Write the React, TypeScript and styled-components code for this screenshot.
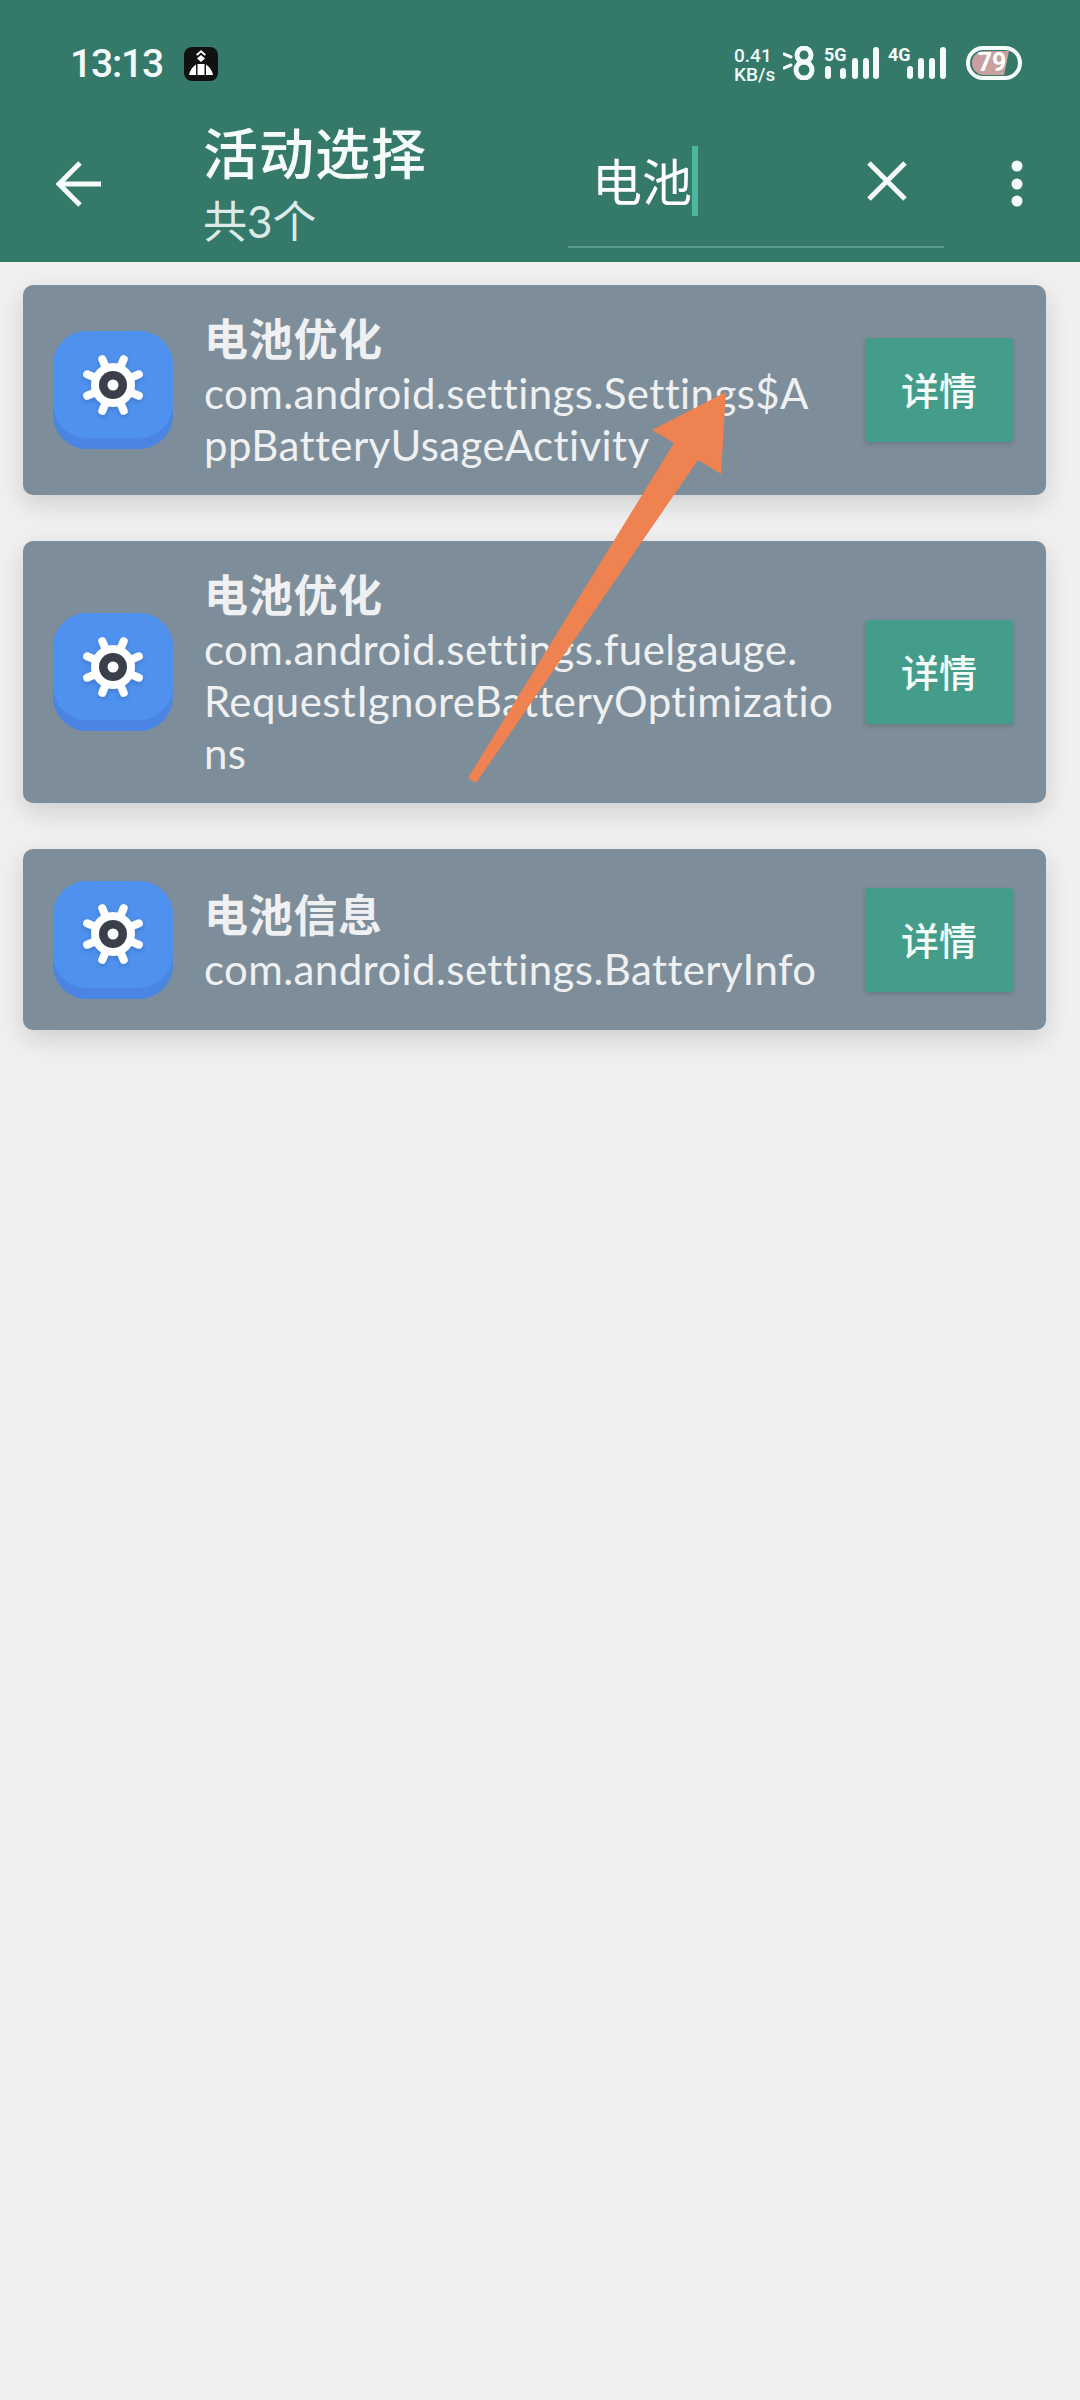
import React from 'react';
import styled, { createGlobalStyle } from 'styled-components';

const GlobalStyle = createGlobalStyle`
  html, body {
    margin: 0;
    padding: 0;
    background: #f0f0f0;
  }
  * {
    box-sizing: border-box;
  }
`;

const FONT = `Lato, "Noto Sans CJK SC", sans-serif`;

const Page = styled.div`
  position: relative;
  width: 1080px;
  height: 2400px;
  overflow: hidden;
  background: #f0f0f0;
  font-family: ${FONT};
`;

const Header = styled.header`
  height: 262px;
  background: #35796b;
  color: #ffffff;
  display: flex;
  flex-direction: column;
`;

const StatusBar = styled.div`
  height: 126px;
  padding: 46px 58px 0 70px;
  display: flex;
  align-items: flex-start;
  justify-content: space-between;
`;

const StatusLeft = styled.div`
  display: flex;
  align-items: center;
  gap: 21px;
`;

const Time = styled.span`
  font-family: Roboto, sans-serif;
  font-size: 39px;
  line-height: 36px;
  font-weight: 500;
  letter-spacing: -1.2px;
  color: #f4fbf9;
`;

const StatusRight = styled.div`
  display: flex;
  align-items: flex-start;
  gap: 7px;
`;

const Speed = styled.div`
  font-family: Roboto, sans-serif;
  font-size: 19px;
  line-height: 19px;
  font-weight: 500;
  color: #eef8f5;
  width: 42px;
  white-space: nowrap;
`;

const SignalGroup = styled.div<{ $width: number }>`
  position: relative;
  width: ${(p) => p.$width}px;
  height: 34px;
`;

const NetworkLabel = styled.span`
  position: absolute;
  left: 0;
  top: 1px;
  font-family: Roboto, sans-serif;
  font-size: 18px;
  line-height: 16px;
  font-weight: 700;
  color: #f4fbf9;
`;

const Battery = styled.div`
  position: relative;
  width: 56px;
  height: 34px;
  margin-left: 13px;
`;

const BatteryLevel = styled.span`
  position: absolute;
  left: 0;
  top: 0;
  width: 52px;
  text-align: center;
  font-family: Roboto, sans-serif;
  font-size: 25px;
  line-height: 34px;
  font-weight: 700;
  color: #ffffff;
`;

const Toolbar = styled.div`
  flex: 1;
  display: flex;
  align-items: stretch;
`;

const BackSlot = styled.div`
  width: 203px;
  padding: 35px 0 0 56px;
`;

const Titles = styled.div`
  width: 365px;
  margin-top: -3px;
`;

const Title = styled.div`
  font-size: 55px;
  line-height: 60px;
  font-weight: 500;
  color: #f4fbf9;
  letter-spacing: 1px;
`;

const Subtitle = styled.div`
  font-size: 44px;
  line-height: 52px;
  margin-top: 12px;
  color: #dcebe7;
`;

const SearchBox = styled.div`
  width: 376px;
  height: 122px;
  padding: 20px 0 0 24px;
  border-bottom: 2px solid #5c9b8c;
  display: flex;
  align-items: flex-start;
  justify-content: space-between;
`;

const SearchText = styled.div`
  display: flex;
  align-items: center;
  height: 70px;
  font-size: 50px;
  color: #ffffff;
`;

const SearchValue = styled.span`
  padding-bottom: 4px;
`;

const Caret = styled.span`
  width: 6px;
  height: 70px;
  background: #4db6a0;
`;

const ClearSlot = styled.div`
  width: 40px;
  margin: 15px 37px 0 0;
`;

const MoreSlot = styled.div`
  padding: 34px 0 0 67px;
`;

const List = styled.main`
  padding: 23px 34px 0 23px;
  display: flex;
  flex-direction: column;
  gap: 46px;
`;

const Card = styled.section`
  display: flex;
  align-items: center;
  min-height: 181px;
  padding: 24px 33px 24px 30px;
  border-radius: 10px;
  background: #7d8d99;
  box-shadow: 0 9px 26px rgba(0, 0, 0, 0.14);
`;

const AppIcon = styled.div`
  flex: none;
  width: 120px;
  height: 118px;
  border-radius: 34px;
  background: #4a85e3;
  margin-right: 31px;
`;

const AppIconFace = styled.div`
  height: 107px;
  border-radius: 34px;
  background: #4f91ee;
  display: flex;
  align-items: center;
  justify-content: center;
`;

const Texts = styled.div`
  flex: 1;
  min-width: 0;
  padding-top: 5px;
  color: #eef0f2;
`;

const Name = styled.div`
  font-size: 44px;
  line-height: 50px;
  font-weight: 700;
  letter-spacing: 0.7px;
  margin-bottom: 3px;
`;

const ActivityLine = styled.div`
  font-size: 42px;
  line-height: 52px;
  letter-spacing: 0.4px;
  white-space: nowrap;
`;

const DetailButton = styled.div`
  flex: none;
  width: 148px;
  height: 104px;
  margin-left: 18px;
  padding-bottom: 3px;
  border-radius: 4px;
  background: #439d8a;
  color: #f4fbf9;
  font-size: 38px;
  font-weight: 500;
  display: flex;
  align-items: center;
  justify-content: center;
  box-shadow: 0 2px 5px rgba(0, 0, 0, 0.16);
`;

const ArrowOverlay = styled.svg`
  position: absolute;
  left: 0;
  top: 0;
  pointer-events: none;
`;

const SignalBars: React.FC<{ label: string; width: number; xs: number[]; tops: number[] }> = ({
  label,
  width,
  xs,
  tops,
}) => (
  <SignalGroup $width={width}>
    <svg width={width} height="34" viewBox={`0 0 ${width} 34`}>
      {xs.map((x, i) => (
        <rect key={x} x={x} y={tops[i]} width="6" height={33 - tops[i]} rx="3" fill="#f4fbf9" />
      ))}
    </svg>
    <NetworkLabel>{label}</NetworkLabel>
  </SignalGroup>
);

const GearIcon: React.FC = () => {
  const teeth = [0, 45, 90, 135, 180, 225, 270, 315];
  return (
    <svg width="70" height="70" viewBox="-35 -35 70 70">
      <defs>
        <filter id="gear-shadow" x="-30%" y="-30%" width="160%" height="160%">
          <feDropShadow dx="0" dy="2" stdDeviation="2" floodColor="#1d3f80" floodOpacity="0.3" />
        </filter>
      </defs>
      <g filter="url(#gear-shadow)" fill="#ffffff">
        <circle r="22" />
        {teeth.map((a) => (
          <line
            key={a}
            x1="0"
            y1="-20"
            x2="0"
            y2="-28"
            stroke="#ffffff"
            strokeWidth="8"
            strokeLinecap="round"
            transform={`rotate(${a + 22.5})`}
          />
        ))}
      </g>
      <circle r="14" fill="#3a3f4a" />
      <circle r="5.5" fill="#ffffff" />
    </svg>
  );
};

// the app wraps these long class names mid-word, so the breaks are kept as data
const items = [
  { name: '电池优化', lines: ['com.android.settings.Settings$A', 'ppBatteryUsageActivity'] },
  {
    name: '电池优化',
    lines: ['com.android.settings.fuelgauge.', 'RequestIgnoreBatteryOptimizatio', 'ns'],
  },
  { name: '电池信息', lines: ['com.android.settings.BatteryInfo'] },
];

const App: React.FC = () => (
  <Page>
    <GlobalStyle />
    <Header>
      <StatusBar>
        <StatusLeft>
          <Time>13:13</Time>
          <svg width="34" height="34" viewBox="0 0 34 34">
            <rect width="34" height="34" rx="8" fill="#111111" />
            <path d="M12 7.5L17 3l5 4.5-1.5 1.2L17 5.6l-3.5 3.1z" fill="#ffffff" />
            <path d="M17 8l4 3.5-4 3.5-4-3.5z" fill="#ffffff" />
            <path d="M5 28q1.5-7 7-10.5V28zM13.5 17h7v11h-7zM22 17.500q5.500 3.500 7 10.500h-7z" fill="#ffffff" />
          </svg>
        </StatusLeft>
        <StatusRight>
          <Speed>
            0.41
            <br />
            KB/s
          </Speed>
          <svg width="34" height="34" viewBox="0 0 34 34">
            <path d="M1 8l7 3M1 22l7-3" stroke="#f4fbf9" strokeWidth="3" strokeLinecap="round" />
            <circle cx="21" cy="9" r="7" fill="none" stroke="#f4fbf9" strokeWidth="5" />
            <circle cx="21" cy="24" r="8" fill="none" stroke="#f4fbf9" strokeWidth="5" />
          </svg>
          <SignalBars label="5G" width={57} xs={[1, 16, 28, 39, 49]} tops={[20, 22, 12, 12, 1]} />
          <SignalBars label="4G" width={58} xs={[19, 30, 41, 52]} tops={[20, 12, 12, 1]} />
          <Battery>
            <svg width="56" height="34" viewBox="0 0 56 34">
              <path d="M18 5h25l-5 24h-20a12 12 0 0 1 0-24z" fill="#c9a0a0" />
              <rect x="2" y="2" width="52" height="30" rx="15" fill="none" stroke="#f4fbf9" strokeWidth="4" />
            </svg>
            <BatteryLevel>79</BatteryLevel>
          </Battery>
        </StatusRight>
      </StatusBar>
      <Toolbar>
        <BackSlot>
          <svg width="46" height="46" viewBox="0 0 46 46">
            <path d="M45 23H3M24 2L3 23l21 21" fill="none" stroke="#f4fbf9" strokeWidth="5" />
          </svg>
        </BackSlot>
        <Titles>
          <Title>活动选择</Title>
          <Subtitle>共3个</Subtitle>
        </Titles>
        <SearchBox>
          <SearchText>
            <SearchValue>电池</SearchValue>
            <Caret />
          </SearchText>
          <ClearSlot>
            <svg width="40" height="40" viewBox="0 0 40 40">
              <path d="M2 2l36 36M38 2L2 38" stroke="#f4fbf9" strokeWidth="5" />
            </svg>
          </ClearSlot>
        </SearchBox>
        <MoreSlot>
          <svg width="12" height="48" viewBox="0 0 12 48">
            <circle cx="6" cy="6" r="5.5" fill="#f4fbf9" />
            <circle cx="6" cy="24" r="5.5" fill="#f4fbf9" />
            <circle cx="6" cy="41" r="5.5" fill="#f4fbf9" />
          </svg>
        </MoreSlot>
      </Toolbar>
    </Header>
    <List>
      {items.map((item) => (
        <Card key={item.lines[0]}>
          <AppIcon>
            <AppIconFace>
              <GearIcon />
            </AppIconFace>
          </AppIcon>
          <Texts>
            <Name>{item.name}</Name>
            {item.lines.map((line) => (
              <ActivityLine key={line}>{line}</ActivityLine>
            ))}
          </Texts>
          <DetailButton>详情</DetailButton>
        </Card>
      ))}
    </List>
    <ArrowOverlay width="1080" height="800" viewBox="0 0 1080 800">
      <path d="M726 392L652 430L674 443L468 778L476 783L698 460L721 474Z" fill="#ef8251" />
    </ArrowOverlay>
  </Page>
);

export default App;
